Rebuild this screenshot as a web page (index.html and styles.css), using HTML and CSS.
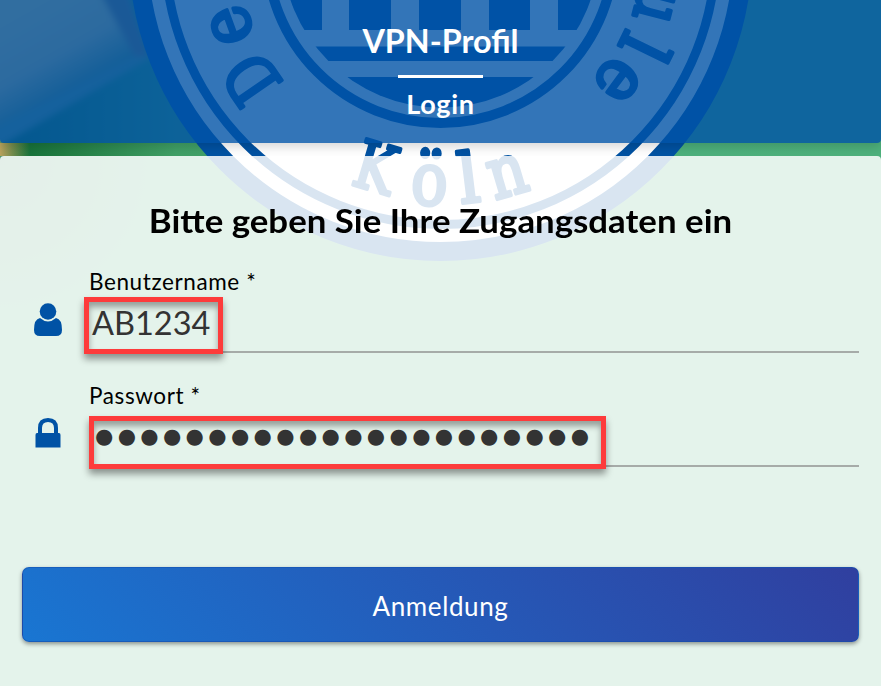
FILE: index.html
```
<!DOCTYPE html>
<html lang="de">
<head>
<meta charset="utf-8">
<title>VPN-Profil Login</title>
<link rel="stylesheet" href="styles.css">
</head>
<body>
<svg class="backdrop" viewBox="0 0 881 686" aria-hidden="true">
  <defs>
    <linearGradient id="green"><stop offset="0" stop-color="#106c35"/><stop offset=".07" stop-color="#217c42"/><stop offset=".2" stop-color="#40a066"/><stop offset=".6" stop-color="#4cb07c"/><stop offset="1" stop-color="#4eb17c"/></linearGradient>
    <linearGradient id="paper" x1="30" y1="0" x2="80" y2="88" gradientUnits="userSpaceOnUse"><stop offset="0" stop-color="#f6dc86"/><stop offset=".6" stop-color="#dcc884"/><stop offset="1" stop-color="#5a8a60"/></linearGradient>
    <linearGradient id="corner"><stop offset="0" stop-color="#b9a25c"/><stop offset="1" stop-color="#b9a25c" stop-opacity="0"/></linearGradient>
    <radialGradient id="dim" cx="0" cy="160" r="190" gradientUnits="userSpaceOnUse"><stop offset="0" stop-color="#4d8464" stop-opacity=".6"/><stop offset="1" stop-color="#4d8464" stop-opacity="0"/></radialGradient>
    <filter id="soft" x="-20%" y="-20%" width="140%" height="140%"><feGaussianBlur stdDeviation="3"/></filter>
  </defs>
  <rect width="881" height="686" fill="url(#green)"/>
  <rect y="156" width="881" height="530" fill="#4eb17c"/>
  <rect y="156" width="200" height="230" fill="url(#dim)"/>
  <g filter="url(#soft)">
    <path d="M-20-20H125L150 58L-20 158Z" fill="#6a9a78"/>
    <path d="M-20-20H107L140 54L-20 135Z" fill="url(#paper)"/>
    <path d="M98-10H126L149 57L135 57Z" fill="#84735c"/>
  </g>
  <rect y="143" width="881" height="13" fill="url(#green)"/>
  <rect y="143" width="30" height="13" fill="url(#corner)"/>
  <g class="seal">
    <circle cx="440.500" cy="-51" r="302.500" fill="#fff" stroke-width="19"/>
    <circle cx="440.500" cy="-51" r="275.500" fill="none" stroke-width="9"/>
    <circle cx="440.500" cy="-51" r="174" fill="none" stroke-width="10"/>
    <clipPath id="disc"><circle cx="440.500" cy="-51" r="158.500"/></clipPath>
    <g clip-path="url(#disc)">
      <path stroke="none" d="M270-20H322V30H270ZM349-20H391V30H349ZM419-20H461V30H419ZM489-20H530V30H489ZM558-20H610V30H558ZM270 46.500H610V61H270ZM270 77H610V120H270Z"/>
    </g>
    <g class="seal-text">
      <text transform="translate(440.500 -51) rotate(-124.500) translate(0 -205) scale(.82 1.04)">D</text>
      <text transform="translate(440.500 -51) rotate(-110) translate(0 -204) scale(.98 1.06)">e</text>
      <text transform="translate(440.500 -51) rotate(-97) translate(0 -204) scale(.85 1)">u</text>
      <text transform="translate(440.500 -51) rotate(104.500) translate(0 -203) scale(.85 1.04)">u</text>
      <text transform="translate(440.500 -51) rotate(116) translate(0 -202) scale(1 1.04)">l</text>
      <text transform="translate(440.500 -51) rotate(126.500) translate(0 -201) scale(1 1.1)">e</text>
      <text transform="translate(440.500 -51) rotate(16.500) translate(0 251) scale(.82 1)">K</text>
      <text transform="translate(440.500 -51) rotate(2.700) translate(0 256) scale(.92 1.1)">ö</text>
      <text transform="translate(440.500 -51) rotate(-7) translate(0 255) scale(1 1.04)">l</text>
      <text transform="translate(440.500 -51) rotate(-16.500) translate(0 256) scale(.9 1.08)">n</text>
    </g>
  </g>
</svg>
<div class="page">
  <header class="header">
    <h1>VPN-Profil</h1>
    <hr>
    <h2>Login</h2>
  </header>
  <main class="panel">
    <h3>Bitte geben Sie Ihre Zugangsdaten ein</h3>
    <div class="field">
      <svg class="icon" viewBox="0 0 28 33"><circle cx="14" cy="8.500" r="8.300"/><path d="M6 15Q14 22 22 15Q28 16 28 27Q28 33 22 33H6Q0 33 0 27Q0 16 6 15Z"/></svg>
      <div class="control">
        <div class="label">Benutzername *</div>
        <div class="value"><div class="mark user-mark"><span class="name">AB1234</span></div></div>
      </div>
    </div>
    <div class="field second">
      <svg class="icon" viewBox="0 0 28 33"><path fill-rule="evenodd" d="M4 16V11Q4 1 14 1T24 11V16H25Q26.500 16 26.500 18V30.500H1.500V18Q1.500 16 3 16ZM8 16H20V11Q20 5 14 5T8 11Z"/></svg>
      <div class="control">
        <div class="label">Passwort *</div>
        <div class="value"><div class="mark pass-mark"><span class="dots">●●●●●●●●●●●●●●●●●●●●●●</span></div></div>
      </div>
    </div>
    <button class="submit"><span>Anmeldung</span></button>
  </main>
</div>
</body>
</html>
```
FILE: styles.css
```
* { box-sizing: border-box; }
body {
  margin: 0;
  width: 881px;
  height: 686px;
  overflow: hidden;
  position: relative;
  font-family: Lato, "Liberation Sans", sans-serif;
}
.backdrop { position: absolute; inset: 0; width: 881px; height: 686px; }
.seal { fill: #0052a3; stroke: #0052a3; }
.seal-text { stroke-width: 3.500px; stroke-linejoin: round; font: 66px "DejaVu Serif", serif; text-anchor: middle; }
.page { position: relative; display: flex; flex-direction: column; gap: 13px; height: 686px; }
h1, h2, h3 { margin: 0; font-weight: 700; white-space: nowrap; }
.header {
  height: 143px;
  padding-top: 21px;
  display: flex;
  flex-direction: column;
  align-items: center;
  color: #fff;
  background: rgba(0, 83, 166, .8);
  border-radius: 0 0 4px 4px;
  box-shadow: 0 3px 12px rgba(0, 0, 0, .18);
}
h1 { font-size: 32.300px; line-height: 40px; }
hr { width: 85px; height: 3px; margin: 14px 0 10px; border: 0; background: #fff; }
h2 { font-size: 27px; line-height: 32px; letter-spacing: .7px; }
.panel {
  flex: 1;
  padding: 44px 22px;
  background: rgba(255, 255, 255, .85);
  border-radius: 4px 4px 0 0;
}
h3 { text-align: center; font-size: 32px; line-height: 42px; color: #000; transform: scaleX(1.088); }
.field { display: flex; height: 87px; margin-top: 24px; }
.icon { width: 28px; height: 33px; margin: 37px 27px 0 12px; fill: #0052a5; flex: none; }
.second { margin-top: 27px; }
.control { flex: 1; }
.label { height: 31px; padding-top: 1px; font-size: 22.500px; line-height: 30px; letter-spacing: .6px; color: #000; white-space: nowrap; }
.value { height: 56px; border-bottom: 2px solid #a6aba8; }
.mark {
  height: 58px;
  border: 5px solid #fd3b3b;
  box-shadow: 0 5px 7px rgba(0, 0, 0, .4), inset 0 5px 6px rgba(0, 0, 0, .35);
  white-space: nowrap;
  color: #333;
}
.user-mark { width: 139px; height: 57px; margin-left: -5px; padding-left: 3px; }
.pass-mark { width: 517px; height: 53px; position: relative; top: 5px; padding-left: 1px; }
.name { font-size: 32.500px; line-height: 42px; }
.dots { display: block; font-family: "DejaVu Sans", sans-serif; font-size: 21px; line-height: 30px; letter-spacing: 4.330px; }
.submit {
  display: block;
  width: 837px;
  height: 75px;
  margin: 100px 0 0;
  padding-top: 3px;
  border: 1px solid rgba(20, 80, 175, .6);
  border-radius: 7px;
  background: linear-gradient(45deg, #1976d2, #303f9f);
  box-shadow: 0 2px 4px rgba(0, 0, 0, .4);
  font: 26px Lato, sans-serif;
  letter-spacing: .6px;
  color: #fff;
}
```
